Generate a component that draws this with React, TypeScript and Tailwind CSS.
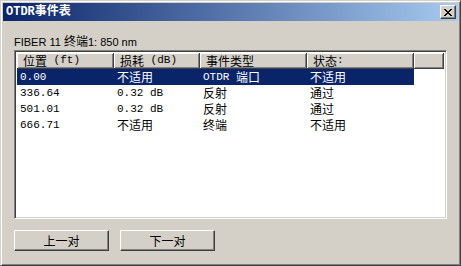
import React from "react";

const CJK = /([\u3000-\u303f\u4e00-\u9fff\uff00-\uffef]+)/;

function Mix({ text, latin = "mono" }: { text: string; latin?: "mono" | "sans" }) {
  const parts = text.split(CJK).filter((p) => p.length > 0);
  return (
    <>
      {parts.map((p, i) =>
        CJK.test(p) ? (
          <span key={i} className="text-[12px]" style={{ fontFamily: '"Noto Sans CJK SC", sans-serif' }}>
            {p}
          </span>
        ) : (
          <span
            key={i}
            className={latin === "mono" ? "text-[11px] whitespace-pre" : "text-[11px] whitespace-pre"}
            style={{
              fontFamily:
                latin === "mono" ? '"Liberation Mono", monospace' : '"Liberation Sans", sans-serif',
            }}
          >
            {p}
          </span>
        )
      )}
    </>
  );
}

const cols = [97, 86, 107, 107];
const headers = ["位置 (ft)", "损耗 (dB)", "事件类型", "状态:"];
const rows = [
  ["0.00", "不适用", "OTDR 端口", "不适用"],
  ["336.64", "0.32 dB", "反射", "通过"],
  ["501.01", "0.32 dB", "反射", "通过"],
  ["666.71", "不适用", "终端", "不适用"],
];

export default function App() {
  return (
    <div className="w-[461px] h-[266px] bg-[#d4d0c8] border border-t-[#d4d0c8] border-l-[#d4d0c8] border-r-[#404040] border-b-[#404040] shadow-[inset_1px_1px_#ffffff,inset_-1px_-1px_#808080] p-[2px] flex flex-col text-black">
      {/* title bar */}
      <div className="h-[18px] flex items-center justify-between pl-[3px] pr-[2px] bg-[linear-gradient(to_right,#0a246a,#a6caf0)]">
        <span
          className="text-white font-bold text-[12px] leading-none"
          style={{ fontFamily: '"Liberation Mono", "Noto Sans CJK SC", monospace' }}
        >
          OTDR事件表
        </span>
        <div className="w-[16px] h-[14px] bg-[#d4d0c8] border border-t-white border-l-white border-r-[#404040] border-b-[#404040] shadow-[inset_-1px_-1px_#808080] flex items-center justify-center">
          <svg width="8" height="7" viewBox="0 0 8 7">
            <path d="M0 0h2v1h-2zM6 0h2v1h-2zM1 1h2v1h-2zM5 1h2v1h-2zM2 2h4v1h-4zM3 3h2v1h-2zM2 4h4v1h-4zM1 5h2v1h-2zM5 5h2v1h-2zM0 6h2v1h-2zM6 6h2v1h-2z" fill="#000" />
          </svg>
        </div>
      </div>

      {/* body */}
      <div className="flex-1 flex flex-col pl-[11px] pr-[11px]">
        <div className="h-[29px] flex items-end pb-[1px] leading-[13px]">
          <span className="text-[11px]" style={{ fontFamily: '"Liberation Sans", "Noto Sans CJK SC", sans-serif' }}>
            FIBER 11 <span className="text-[12px]">终端</span>1: 850 nm
          </span>
        </div>
        <div className="h-[169px] w-[433px] bg-white border border-t-[#808080] border-l-[#808080] border-r-white border-b-white shadow-[inset_1px_1px_#404040,inset_-1px_-1px_#d4d0c8] p-[2px] pr-[2px] flex flex-col">
          {/* header */}
          <div className="flex h-[16px] bg-[#d4d0c8]">
            {headers.map((h, i) => (
              <div
                key={i}
                className="h-[16px] flex items-center pl-[6px] border-r border-b border-r-[#404040] border-b-[#404040] shadow-[inset_1px_1px_#ffffff,inset_-1px_-1px_#808080] leading-none"
                style={{ width: cols[i] }}
              >
                <Mix text={h} />
              </div>
            ))}
            <div className="flex-1 h-[16px] border-r border-b border-r-[#404040] border-b-[#404040] shadow-[inset_1px_1px_#ffffff,inset_-1px_-1px_#808080]" />
          </div>
          {rows.map((r, ri) => (
            <div key={ri} className="flex h-[16px]">
              <div className={`flex ${ri === 0 ? "bg-[#0a246a] text-white" : ""}`}>
                {r.map((c, ci) => (
                  <div
                    key={ci}
                    className={`h-[16px] flex items-center leading-none ${ci === 0 ? "pl-[3px]" : "pl-[3px]"}`}
                    style={{ width: cols[ci] }}
                  >
                    <Mix text={c} />
                  </div>
                ))}
              </div>
            </div>
          ))}
        </div>
        <div className="flex gap-[11px] mt-[11px]">
          {["上一对", "下一对"].map((b) => (
            <div
              key={b}
              className="w-[95px] h-[21px] bg-[#d4d0c8] border border-t-white border-l-white border-r-[#404040] border-b-[#404040] shadow-[inset_-1px_-1px_#808080] flex items-center justify-center text-[12px]"
              style={{ fontFamily: '"Noto Sans CJK SC", sans-serif' }}
            >
              {b}
            </div>
          ))}
        </div>
      </div>
    </div>
  );
}
